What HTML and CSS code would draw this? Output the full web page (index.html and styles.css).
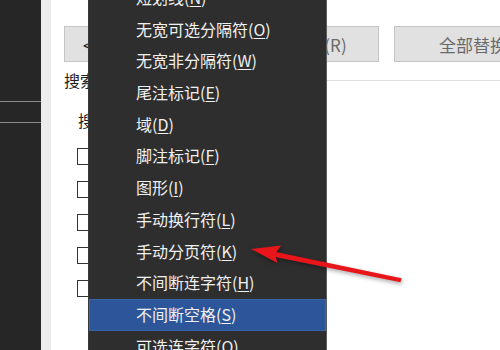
FILE: index.html
```html
<!DOCTYPE html>
<html lang="zh-CN">
<head>
  <meta charset="UTF-8">
  <title>查找和替换 - 特殊格式</title>
  <link rel="stylesheet" href="styles.css">
</head>
<body>
  <div class="screen">

    <!-- Navigation pane -->
    <aside class="nav">
      <div class="nav-band"></div>
    </aside>
    <div class="gutter"></div>

    <!-- Find & Replace dialog -->
    <section class="dialog">
      <div class="btn-row">
        <button class="btn btn-less">&lt;&lt; 更少(L)</button>
        <button class="btn">替换(R)</button>
        <button class="btn btn-wide">全部替换(A)</button>
      </div>
      <div class="group-head">
        <span>搜索选项</span>
        <i class="rule"></i>
      </div>
      <div class="search-row">搜索: 全部</div>
      <ul class="checks">
        <li><span class="box"></span>区分大小写(H)</li>
        <li><span class="box"></span>全字匹配(Y)</li>
        <li><span class="box"></span>使用通配符(U)</li>
        <li><span class="box"></span>同音(英文)(K)</li>
        <li><span class="box"></span>查找单词的所有形式(英文)(W)</li>
      </ul>
    </section>

    <!-- Special characters dropdown -->
    <div class="menu">
      <ul class="menu-list">
        <li>短划线(<u>N</u>)</li>
        <li>无宽可选分隔符(<u>O</u>)</li>
        <li>无宽非分隔符(<u>W</u>)</li>
        <li>尾注标记(<u>E</u>)</li>
        <li>域(<u>D</u>)</li>
        <li>脚注标记(<u>F</u>)</li>
        <li>图形(<u>I</u>)</li>
        <li>手动换行符(<u>L</u>)</li>
        <li>手动分页符(<u>K</u>)</li>
        <li>不间断连字符(<u>H</u>)</li>
        <li class="active">不间断空格(<u>S</u>)</li>
        <li>可选连字符(<u>O</u>)</li>
      </ul>
    </div>

    <!-- Red callout arrow -->
    <svg class="arrow" width="500" height="350" viewBox="0 0 500 350">
      <polygon points="401.5,278.3 272.5,251.2 271.5,256.2 400.5,282.2" fill="#e8151b"/>
      <polygon points="251,249 281,245.5 275,254 277.5,263" fill="#e8151b"/>
    </svg>
  </div>
</body>
</html>
```

FILE: styles.css
```css
* {
  box-sizing: border-box;
}

body {
  margin: 0;
  font-family: "Noto Sans CJK SC", "Noto Sans", sans-serif;
  background: #fff;
}

.screen {
  position: relative;
  display: flex;
  width: 500px;
  height: 350px;
  overflow: hidden;
}

.nav {
  width: 41px;
  flex-shrink: 0;
  background: #262626;
  padding-top: 101px;
}

.nav-band {
  height: 22px;
  border-top: 1px solid #8a8a8a;
  border-bottom: 1px solid #8a8a8a;
}

.gutter {
  width: 10px;
  flex-shrink: 0;
  background: #ececec;
}

.dialog {
  flex: 1;
  min-width: 0;
  padding-left: 13px;
  background: #fff;
  color: #1e1e1e;
  font-size: 16px;
}

.btn-row {
  display: flex;
  gap: 15px;
  margin-top: 26px;
}

.btn {
  flex-shrink: 0;
  width: 115px;
  height: 36px;
  background: #e1e1e1;
  border: 1px solid #c4c4c4;
  color: #6a6a6a;
  font-family: inherit;
  font-size: 17px;
  padding: 0 6px 0 0;
}

.btn-less {
  text-align: left;
  padding-left: 18px;
  color: #1e1e1e;
  margin-right: 70px;
}

.btn-wide {
  width: 180px;
  padding: 0;
}

.group-head {
  display: flex;
  align-items: center;
  gap: 8px;
  height: 20px;
  margin-top: 8px;
  line-height: 20px;
}

.rule {
  flex: 1;
  height: 1px;
  background: #dedede;
}

.search-row {
  height: 20px;
  line-height: 20px;
  margin-top: 20px;
  padding-left: 14px;
}

.checks {
  list-style: none;
  margin: 10px 0 0;
  padding: 0 0 0 13px;
}

.checks li {
  display: flex;
  align-items: center;
  gap: 8px;
  height: 33px;
}

.box {
  width: 17px;
  height: 17px;
  border: 1px solid #333;
  background: #fff;
}

.menu {
  position: absolute;
  top: 0;
  left: 88px;
  width: 239px;
  height: 350px;
  background: #2e2e2e;
  border-left: 1px solid #3a3a3a;
  border-right: 1px solid #5c5c5c;
  overflow: hidden;
}

.menu-list {
  list-style: none;
  margin: -18px 0 0;
  padding: 0;
}

.menu-list li {
  height: 31.7px;
  line-height: 31.7px;
  padding-left: 47px;
  color: #f0f0f0;
  font-size: 16px;
  white-space: nowrap;
}

.menu-list li u {
  text-decoration-thickness: 1px;
  text-underline-offset: 2px;
}

.menu-list li.active {
  background: #2c5699;
  box-shadow: inset 0 0 0 1px #3a64a8;
}

.arrow {
  position: absolute;
  top: 0;
  left: 0;
  pointer-events: none;
  filter: drop-shadow(1px 2px 2px rgba(0, 0, 0, 0.35));
}
```
